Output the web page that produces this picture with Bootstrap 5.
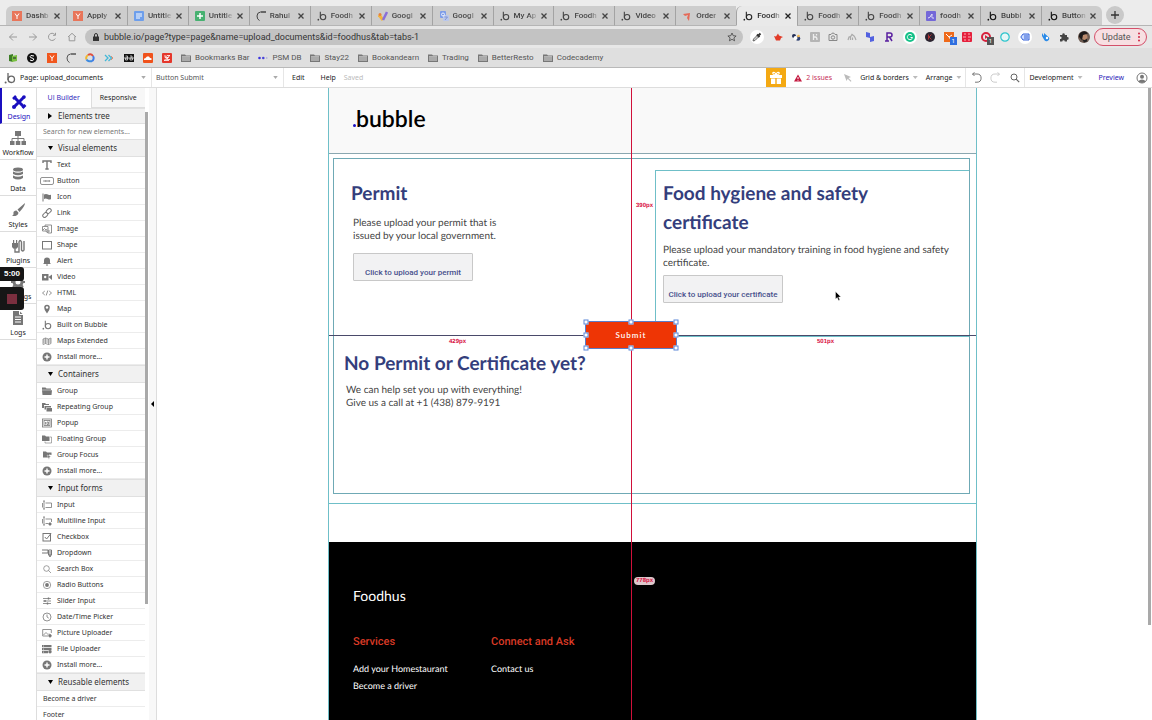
<!DOCTYPE html>
<html lang="en">
<head>
<meta charset="utf-8">
<meta name="viewport" content="width=device-width, initial-scale=1">
<title>Foodhus | Bubble Editor</title>
<link href="https://cdn.jsdelivr.net/npm/bootstrap@5.3.0/dist/css/bootstrap.min.css" rel="stylesheet">
<style>
  :root { --cyan:#6fbfc8; --navy:#343e7c; --ui:"Noto Sans","Open Sans",sans-serif; --chrome:Roboto,"Liberation Sans",sans-serif; }
  body { font-family:var(--ui); font-size:7px; line-height:14px; color:#333; background:#fff; height:100vh; overflow:hidden; }
  button, input, select { font:inherit; color:inherit; border:0; background:none; padding:0; }
  a { color:inherit; text-decoration:none; }
  svg { display:block; flex:none; }
  .i10 { width:10px; height:10px; } .i12 { width:12px; height:12px; } .i16 { width:16px; height:16px; }

  /* browser chrome */
  .browser { font-family:var(--chrome); font-size:8px; background:#e4e4e4; color:#444; }
  .tabstrip { height:26px; background:#ececec; padding:6px 4px 0 6px; border-bottom:1px solid #b5b5b5; }
  .tabstrip ul { flex:1; min-width:0; margin-bottom:-1px; }
  .btab { flex:1 1 0; min-width:0; height:20px; background:#cdcdcd; padding:0 5px 0 6px; position:relative; border-bottom:1px solid #b5b5b5; }
  .btab + .btab { border-left:1px solid #a3a3a3; }
  .btab:first-child { border-top-left-radius:6px; }
  .btab:last-child { border-top-right-radius:6px; }
  .btab a { overflow:hidden; white-space:nowrap; flex:1; margin-left:4px; margin-right:2px; font-weight:500; -webkit-mask-image:linear-gradient(90deg,#000 60%,transparent); mask-image:linear-gradient(90deg,#000 60%,transparent); }
  .btab.current { background:#e9e9e9; border-bottom-color:#e9e9e9; border-radius:6px 6px 0 0; color:#222; }
  .newtab { width:18px; height:18px; border-radius:50%; background:#c9c9c9; margin-left:4px; }
  .tools { height:22px; background:#e7e7e7; padding:0 5px 0 8px; }
  .navs { width:77px; padding-right:8px; color:#999; }
  .omni { height:16px; border-radius:8px; background:#c3c3c3; padding:0 6px 0 7px; }
  .omni input { font-size:9px; color:#333; outline:0; height:16px; }
  .exts { width:340px; margin:0 4px 0 7px; }
  .round { width:14px; height:14px; border-radius:50%; background:#fff; }
  .tag { position:absolute; right:-3px; bottom:-3px; width:7px; height:8px; font-size:6px; line-height:8px; color:#fff; text-align:center; }
  .update { height:18px; width:53px; border:1px solid #d4506a; border-radius:9px; background:#f7dfe2; font-size:9px; color:#555; padding:0 5px 0 7px; }
  .marks { height:20px; background:#dfdfdf; padding:0 8px; border-bottom:1px solid #b9b9b9; color:#555; gap:9px; }
  .marks .favs { width:164px; margin-right:0; }
  .marks a { white-space:nowrap; }

  /* editor bar */
  .editbar { height:20px; border-bottom:1px solid #ddd; white-space:nowrap; color:#222; }
  .editbar .sep { align-self:stretch; width:1px; background:#e6e6e6; }
  .pick { appearance:none; height:18px; background:url("data:image/svg+xml,%3Csvg xmlns='http://www.w3.org/2000/svg' viewBox='0 0 6 4'%3E%3Cpath d='M0 0h6L3 4z' fill='%23aaa'/%3E%3C/svg%3E") no-repeat right 5px center/5px 3px; }
  .pick-page { width:131px; } .pick-el { width:127px; color:#555; }
  .caret { width:5px; height:3px; background:#bbb; clip-path:polygon(0 0,100% 0,50% 100%); }
  .gift { width:20px; height:19px; background:#f4a913; }

  /* editor body */
  .rail { width:37px; border-right:1px solid #ddd; }
  .rail a { height:36px; border-bottom:1px solid #ddd; padding-top:6px; color:#222; }
  .rail svg { color:#777; width:16px; height:16px; }
  .rail .on { border-left:2px solid #1a0fc0; color:#1a0fc0; }
  .rail .on svg { color:#1a0fc0; }
  .side { width:108px; }
  .side .modes { height:20px; }
  .side .modes button { flex:1; font-weight:400; font-family:"Open Sans",sans-serif; }
  .side .modes button + button { background:#f7f7f7; border-left:1px solid #ddd; border-bottom:1px solid #ddd; color:#111; }
  .grp { font-size:8px; background:#f1f1f1; height:18px; padding-left:11px; gap:5px; border-top:1px solid #e0e0e0; border-bottom:1px solid #e0e0e0; width:100%; color:#333; }
  .grp.tree { height:16px; }
  .grp .tri { width:5px; height:4px; background:#000; clip-path:polygon(0 0,100% 0,50% 100%); }
  .grp.tree .tri { height:6px; width:4px; margin-right:1px; clip-path:polygon(0 0,100% 50%,0 100%); }
  .find { height:15px; width:100%; padding-left:6px; outline:0; }
  .find::placeholder { color:#777; opacity:1; }
  .els li { height:16px; border-bottom:1px solid #ececec; padding-left:5px; gap:5px; }
  .els svg { width:10px; height:10px; color:#777; }
  .els svg.wide { width:14px; margin:0 -2px; }
  .els .plain { padding-left:6px; }
  .sbar { width:4px; }
  .sbar div { background:#a9a9a9; width:3px; }
  .gutter { width:8px; background:#f8f8f8; border-right:1px solid #ddd; }
  .gutter span { width:3px; height:6px; background:#000; clip-path:polygon(100% 0,0 50%,100% 100%); }
  .recorder { position:absolute; left:0; top:179px; width:24px; font:700 8px/14px "Liberation Sans",sans-serif; color:#fff; }
  .recorder div { background:#161616; border-radius:0 3px 3px 0; }
  .recorder .stop { height:23px; margin-top:6px; width:24px; }
  .recorder i { width:10px; height:10px; background:#7b2f3f; }

  /* page being edited */
  .sheet { width:100%; max-width:649px; font-family:Lato,sans-serif; text-rendering:geometricPrecision; border:solid var(--cyan); border-width:0 1px; position:relative; }
  .masthead { height:66px; background:#f9f9f9; border-bottom:1px solid #8aa7b0; padding:0 24px 6px; }
  .wordmark { font-size:23px; line-height:28px; font-weight:600; color:#000; }
  .wordmark::before { content:""; display:inline-block; width:3px; height:3px; border-radius:50%; background:#1a0fc0; }
  .zone { padding:4px 6px 9px 4px; border-bottom:1px solid var(--cyan); }
  .frame { border:1px solid #6fa9b5; height:336px; }
  .frame .upper { height:178px; padding-top:11px; }
  .permit { flex:0 0 321px; padding:9px 0 0 17px; }
  .cert { border:1px solid var(--cyan); border-right:0; padding:8px 7px 0; }
  .frame h2 { font-size:19px; line-height:29px; font-weight:700; color:var(--navy); margin:0; }
  .frame p { font-size:10px; line-height:13px; color:#444; margin:0; }
  .inset { padding-left:2px; }
  .permit p { margin-top:9px; } .permit .upload { margin-top:10px; }
  .cert p { margin-top:7px; } .cert .upload { margin-top:5px; }
  .help { padding:12px 0 0 10px; } .help p { margin-top:6px; }
  .upload { width:120px; height:28px; border:1px solid #c8c8c8; border-radius:1px; background:#f2f2f3; font:500 8px/12px Roboto,sans-serif; color:#47508c; padding-top:11px; display:block; }
  .foot { background:#000; color:#fff; margin-top:38px; height:260px; padding:44px 24px 0; font-size:9px; line-height:17px; }
  .foot .name { font-size:14px; line-height:20px; }
  .foot h3 { font:500 11px/16px Roboto,sans-serif; color:#d93a26; margin:0; }
  .foot .cols { margin-top:28px; }
  .foot .cols > div { width:138px; }
  .foot ul { margin-top:10px; }
  .vguide { position:absolute; left:302px; top:0; bottom:0; border-left:1px solid #d0103a; }
  .hguide { position:absolute; left:0; right:0; top:247px; border-top:1px solid #4a4a6a; }
  .px { position:absolute; font:700 6px/8px "Liberation Sans",sans-serif; color:#d8103f; }
  .submit { position:absolute; left:256px; top:233px; width:92px; height:28px; background:#ee3505; color:#fff; font:600 8px/26px Lato,sans-serif; letter-spacing:1px; border:1px solid #5a7cc9; text-align:center; }
  .submit i { position:absolute; width:5px; height:5px; background:#fff; border:1px solid #5a86d8; transform:translate(-50%,-50%); }
  .pointer { position:absolute; left:506px; top:203px; }
</style>
</head>
<body class="d-flex flex-column">
<svg class="d-none" aria-hidden="true">
  <symbol id="b" viewBox="0 0 12 12"><path d="M4 1v7" stroke="currentColor" stroke-width="1.3"/><circle cx="7.3" cy="7.3" r="3.2" fill="none" stroke="currentColor" stroke-width="1.3"/><circle cx="1.6" cy="10.4" r="1" fill="currentColor"/></symbol>
  <symbol id="x" viewBox="0 0 8 8"><path d="M1.5 1.5l5 5M6.500 1.500l-5 5" stroke="currentColor" stroke-width="1.3"/></symbol>
  <symbol id="y" viewBox="0 0 10 10"><path d="M0 0h10v10H0z" fill="currentColor"/><path d="M3 2.500l2 3 2-3M5 5.500V8" fill="none" stroke="#fff"/></symbol>
  <symbol id="arc" viewBox="0 0 10 10"><path d="M10 1H4.500Q1 1.500 1 5Q1 8.500 3.500 9.500M5 1h5" fill="none" stroke="currentColor"/></symbol>
  <symbol id="folder" viewBox="0 0 10 10"><path d="M0 1.500h4l1 1h5V9H0z" fill="#777"/><path d="M1 4h8v4H1z" fill="#aaa"/><path d="M1 3.500h8" stroke="#ddd" stroke-width=".6"/></symbol>
  <symbol id="plus" viewBox="0 0 10 10"><circle cx="5" cy="5" r="4.500" fill="currentColor"/><path d="M5 2.500v5M2.500 5h5" stroke="#fff" stroke-width="1.400"/></symbol>
  <symbol id="fold" viewBox="0 0 10 10"><path d="M0 1.500h3.500l1 1H9v1.200H0zM0 4.200h10L9.500 9H.5z" fill="currentColor"/></symbol>
  <symbol id="mag" viewBox="0 0 10 10"><circle cx="4" cy="4" r="3" fill="none" stroke="currentColor"/><path d="M6.200 6.200L9.200 9.200" stroke="currentColor" stroke-width="1.200"/></symbol>
</svg>

<header class="browser">
  <div class="tabstrip d-flex">
    <ul class="list-unstyled d-flex">
      <li class="btab d-flex align-items-center"><svg class="i10" style="color:#e8755a"><use href="#y"/></svg><a href="#">Dashb</a><svg width="8" height="8"><use href="#x"/></svg></li>
      <li class="btab d-flex align-items-center"><svg class="i10" style="color:#e8755a"><use href="#y"/></svg><a href="#">Apply</a><svg width="8" height="8"><use href="#x"/></svg></li>
      <li class="btab d-flex align-items-center"><svg class="i10" viewBox="0 0 10 10"><rect width="10" height="10" rx="1" fill="#6d9eeb"/><path d="M2 3h6M2 5h6M2 7h4" stroke="#fff"/></svg><a href="#">Untitle</a><svg width="8" height="8"><use href="#x"/></svg></li>
      <li class="btab d-flex align-items-center"><svg class="i10" viewBox="0 0 10 10"><rect width="10" height="10" rx="1" fill="#47b171"/><path d="M2 5h6M5 2v6" stroke="#fff" stroke-width="1.500"/></svg><a href="#">Untitle</a><svg width="8" height="8"><use href="#x"/></svg></li>
      <li class="btab d-flex align-items-center"><svg class="i10"><use href="#arc"/></svg><a href="#">Rahul</a><svg width="8" height="8"><use href="#x"/></svg></li>
      <li class="btab d-flex align-items-center"><svg class="i10"><use href="#b"/></svg><a href="#">Foodh</a><svg width="8" height="8"><use href="#x"/></svg></li>
      <li class="btab d-flex align-items-center"><svg class="i10" viewBox="0 0 10 10"><path d="M1 4l4 5" stroke="#f1b53d" stroke-width="3"/><path d="M9 1L5 9" stroke="#8a6fd8" stroke-width="2.500"/><circle cx="2" cy="3.500" r="1.500" fill="#e9823d"/></svg><a href="#">Googl</a><svg width="8" height="8"><use href="#x"/></svg></li>
      <li class="btab d-flex align-items-center"><svg class="i10" viewBox="0 0 10 10"><rect x="1" width="6" height="7" rx="1" fill="#7e9de8"/><rect x="4" y="4" width="6" height="6" rx="1" fill="#b9c7ec"/><circle cx="4" cy="3.500" r="1.500" fill="none" stroke="#fff" stroke-width=".8"/><path d="M5.500 6h3L6 9" stroke="#6d84c8" fill="none" stroke-width=".7"/></svg><a href="#">Googl</a><svg width="8" height="8"><use href="#x"/></svg></li>
      <li class="btab d-flex align-items-center"><svg class="i10"><use href="#b"/></svg><a href="#">My Ap</a><svg width="8" height="8"><use href="#x"/></svg></li>
      <li class="btab d-flex align-items-center"><svg class="i10"><use href="#b"/></svg><a href="#">Foodh</a><svg width="8" height="8"><use href="#x"/></svg></li>
      <li class="btab d-flex align-items-center"><svg class="i10"><use href="#b"/></svg><a href="#">Video</a><svg width="8" height="8"><use href="#x"/></svg></li>
      <li class="btab d-flex align-items-center"><svg class="i10" viewBox="0 0 10 10"><path d="M1 3l7-1-1 8-2-3 1-3-3 1z" fill="#e56a58"/></svg><a href="#">Order</a><svg width="8" height="8"><use href="#x"/></svg></li>
      <li class="btab current d-flex align-items-center"><svg class="i10"><use href="#b"/></svg><a href="#">Foodh</a><svg width="8" height="8"><use href="#x"/></svg></li>
      <li class="btab d-flex align-items-center"><svg class="i10"><use href="#b"/></svg><a href="#">Foodh</a><svg width="8" height="8"><use href="#x"/></svg></li>
      <li class="btab d-flex align-items-center"><svg class="i10"><use href="#b"/></svg><a href="#">Foodh</a><svg width="8" height="8"><use href="#x"/></svg></li>
      <li class="btab d-flex align-items-center"><svg class="i10" viewBox="0 0 10 10"><rect width="10" height="10" rx="1" fill="#7468d8"/><path d="M2 7c3 0 3-4 4-4s-2 5 2 4" stroke="#fff" fill="none" stroke-width=".8"/></svg><a href="#">foodh</a><svg width="8" height="8"><use href="#x"/></svg></li>
      <li class="btab d-flex align-items-center"><svg class="i10" style="color:#111"><use href="#b"/></svg><a href="#">Bubbl</a><svg width="8" height="8"><use href="#x"/></svg></li>
      <li class="btab d-flex align-items-center"><svg class="i10" style="color:#111"><use href="#b"/></svg><a href="#">Button</a><svg width="8" height="8"><use href="#x"/></svg></li>
    </ul>
    <button class="newtab d-flex align-items-center justify-content-center me-4" aria-label="New tab"><svg class="i10" viewBox="0 0 10 10"><path d="M5 1v8M1 5h8" stroke="#333" stroke-width="1.300"/></svg></button>
  </div>

  <div class="tools d-flex align-items-center">
    <div class="navs d-flex justify-content-between">
      <button aria-label="Back"><svg class="i10" viewBox="0 0 10 10" fill="none" stroke="currentColor"><path d="M9 5H1.500M5 1.500L1.500 5 5 8.500"/></svg></button>
      <button aria-label="Forward"><svg class="i10" viewBox="0 0 10 10" fill="none" stroke="currentColor"><path d="M1 5h7.500M5 1.500L8.500 5 5 8.500"/></svg></button>
      <button aria-label="Reload"><svg class="i10" viewBox="0 0 10 10" fill="none" stroke="currentColor"><path d="M8.300 6.500a3.600 3.600 0 1 1-.5-4M8.500 .8v2.500H6"/></svg></button>
      <button aria-label="Home"><svg class="i10" viewBox="0 0 10 10" fill="none" stroke="currentColor"><path d="M1 5l4-3.700L9 5M2.200 4.500v4.300h5.600V4.500"/></svg></button>
    </div>
    <div class="omni d-flex align-items-center flex-grow-1">
      <svg width="8" height="8" viewBox="0 0 8 8"><path d="M1 3.500h6V8H1z" fill="#333"/><path d="M2.500 4V2a1.500 1.500 0 0 1 3 0v2" fill="none" stroke="#333"/></svg>
      <input class="flex-grow-1 ms-1" aria-label="Address" value="bubble.io/page?type=page&amp;name=upload_documents&amp;id=foodhus&amp;tab=tabs-1">
      <svg class="i10" viewBox="0 0 10 10"><path d="M5 1l1.200 2.700 2.900.3-2.200 1.900.7 2.900L5 7.300 2.400 8.800l.7-2.900L.9 4l2.900-.3z" fill="none" stroke="#444" stroke-width=".8"/></svg>
    </div>
    <div class="exts d-flex align-items-center justify-content-between">
      <span class="round d-flex align-items-center justify-content-center"><svg class="i10" viewBox="0 0 10 10"><path d="M1 9l.5-2L5.500 3l1.500 1.500L3 8.500z" fill="#ccc" stroke="#444" stroke-width=".7"/><path d="M5 2.500L7.500 5M6.300 3.700L8.500 1.500" stroke="#333" stroke-width="2"/></svg></span>
      <svg class="i10" viewBox="0 0 10 10"><path d="M1 4l2 .5L5 1.500l1 2 4 1.500-2 1-1 2.500H3z" fill="#e23b28"/></svg>
      <svg class="i10" viewBox="0 0 10 10"><circle cx="3" cy="4" r="2" fill="#222d55"/><circle cx="7" cy="6.500" r="2.300" fill="#2d3f70"/><circle cx="4.500" cy="6" r="2" fill="#fff"/><circle cx="7.500" cy="4" r="1.300" fill="#f3b64c"/></svg>
      <svg class="i10" viewBox="0 0 10 10"><rect width="10" height="10" rx="1" fill="#b5b5b5"/><path d="M3.500 2v6M3.500 5h2q1.500 0 1.500 3M6.500 2v1.500" stroke="#eee" stroke-width="1.300" fill="none"/></svg>
      <svg class="i10" viewBox="0 0 10 10" fill="none" stroke="#888"><path d="M1 2.500h2L4 1.200h2l1 1.300h2v6H1z"/><circle cx="5" cy="5.500" r="1.700"/></svg>
      <svg class="i10" viewBox="0 0 10 10" fill="none" stroke="#aaa" stroke-width="1.200"><path d="M1 8l1-3 1.500-.5M3.500 8V5L5 2.500 7 4l1 1.500L9 8M5.500 8V5.500"/></svg>
      <svg class="i10" viewBox="0 0 10 10"><path d="M1 0l4 1v5L1 5zM5 5l4-1v5l-4 1z" fill="#5261e0"/></svg>
      <svg class="i10" viewBox="0 0 10 10"><path d="M3 9V1h3a2 2 0 0 1 0 4H3M5.500 5l2.500 4M1 9h4" fill="none" stroke="#5a20a0" stroke-width="1.500"/></svg>
      <span class="round d-flex align-items-center justify-content-center"><svg class="i10" viewBox="0 0 10 10"><circle cx="5" cy="5" r="5" fill="#15c188"/><path d="M7 3.500A2.600 2.600 0 1 0 7.500 5.500H5.500" stroke="#fff" fill="none"/></svg></span>
      <svg class="i10" viewBox="0 0 10 10"><circle cx="5" cy="5" r="5" fill="#2c2430"/><path d="M3.500 2.500v5M6.500 2.500L4 5l2.500 2.500" stroke="#a33" fill="none"/></svg>
      <span class="position-relative"><svg class="i10" viewBox="0 0 10 10"><rect width="10" height="10" fill="#ef6a1a"/><path d="M2 2l3 3 3-2M5 5l2 3" stroke="#fff" fill="none"/></svg><span class="tag" style="background:#2f6fe0">1</span></span>
      <svg class="i10" viewBox="0 0 10 10"><rect width="10" height="10" rx="1" fill="#e5203c"/><path d="M2 2h2M6 2h2M1 5h3M6 5h3M2 8h2M6 8h2" stroke="#ffb0b8"/></svg>
      <span class="position-relative"><svg class="i10" viewBox="0 0 10 10"><circle cx="5" cy="5" r="4" fill="none" stroke="#d8203c" stroke-width="2"/><path d="M4 3l3 2-3 2z" fill="#d8203c"/></svg><span class="tag" style="background:#555">1</span></span>
      <svg class="i10" viewBox="0 0 10 10"><circle cx="5" cy="5" r="4.200" fill="#e8f7f7" stroke="#2cc4cc" stroke-width="1.200"/><path d="M3 5h.1M5 5h.1M7 5h.1" stroke="#2cc4cc"/></svg>
      <span class="round d-flex align-items-center justify-content-center"><svg class="i10" viewBox="0 0 10 10"><path d="M3 2h6v6H3L.8 5z" fill="#cdddff" stroke="#3763d8"/><path d="M4 4h4M4 6h4" stroke="#3763d8"/></svg></span>
      <svg class="i10" viewBox="0 0 10 10"><path d="M1 1l2 3V1l5 4.500a2.500 2.500 0 1 1-5 2L1 4z" fill="#2b8be8"/><circle cx="6" cy="6" r="1.200" fill="#fff"/></svg>
      <svg class="i10" viewBox="0 0 10 10"><path d="M1 3h2.300a1.300 1.300 0 1 1 2.500 0H8v2.200a1.300 1.300 0 1 1 0 2.500V9.500H5.800a1.200 1.200 0 1 0-2.500 0H1V7a1.200 1.200 0 1 0 0-2.300z" fill="#444"/></svg>
      <svg class="i12" viewBox="0 0 12 12"><circle cx="6" cy="6" r="6" fill="#6d5a50"/><circle cx="6.500" cy="6" r="3" fill="#b98a6d"/><path d="M1 6a5 5 0 0 1 9-3.500L5 4 4 9z" fill="#1d1a1a"/><path d="M4 8q3 2 5-.5v3l-3 1z" fill="#222"/></svg>
    </div>
    <button class="update d-flex align-items-center justify-content-between">Update<svg width="4" height="10" viewBox="0 0 4 10" fill="#d02846"><circle cx="2" cy="1.500" r="1"/><circle cx="2" cy="5" r="1"/><circle cx="2" cy="8.500" r="1"/></svg></button>
  </div>

  <nav class="marks d-flex align-items-center" aria-label="Bookmarks">
    <div class="favs d-flex align-items-center justify-content-between">
      <svg class="i10" viewBox="0 0 10 10"><path d="M1 2l4-1v8L1 8z" fill="#3c7d25"/><path d="M4 3l5-1v6L4 9z" fill="#7bc043"/><path d="M5 5h3" stroke="#223"/></svg>
      <svg class="i10" viewBox="0 0 10 10"><circle cx="5" cy="5" r="5" fill="#111"/><path d="M7 3Q3 1.500 3 3.800 3.500 5 5 5q2.500.5 1.500 2T3 7" fill="none" stroke="#fff"/></svg>
      <svg class="i10" style="color:#f1571e"><use href="#y"/></svg>
      <svg class="i10"><use href="#arc"/></svg>
      <svg class="i10" viewBox="0 0 10 10" fill="none" stroke-width="2"><path d="M1.500 6.500A3.700 3.700 0 0 1 3 2" stroke="#f0b62e"/><path d="M3 2a3.700 3.700 0 0 1 5 1" stroke="#df4d3c"/><path d="M8 3a3.700 3.700 0 0 1-1 5.200" stroke="#3f7ce8"/><path d="M7 8.200H4A3.500 3.500 0 0 1 1.500 6.500" stroke="#3d8ae0"/></svg>
      <svg class="i10" viewBox="0 0 10 10" fill="none"><path d="M1 2l3 3-3 3M4.500 2l3 3-3 3" stroke="#42b8d8" stroke-width="1.300"/><path d="M7 3l2 2-2 2" stroke="#e88a6a"/></svg>
      <svg class="i10" viewBox="0 0 10 10"><rect y="1" width="10" height="8" fill="#111"/><path d="M1.500 3h2v2h-2v2h2V5M6 3h2v2H6v2h2.500V5M0 5h10" fill="none" stroke="#ddd" stroke-width=".8"/></svg>
      <svg class="i10" viewBox="0 0 10 10"><rect width="10" height="10" rx="1" fill="#f0521c"/><path d="M1 7V5.500h1l1-1 1-1h2l1 1.500 1.500.3V7z" fill="#fff"/></svg>
      <svg class="i10" viewBox="0 0 10 10"><rect width="10" height="10" rx="1" fill="#e5372c"/><path d="M2 3h2.500L3 4.500h3.500l-2 2H8M5 2.500h3L2 7.500h5" fill="none" stroke="#fff" stroke-width=".8"/></svg>
    </div>
    <a href="#" class="d-flex align-items-center gap-1"><svg class="i10"><use href="#folder"/></svg>Bookmarks Bar</a>
    <a href="#" class="d-flex align-items-center gap-1"><svg class="i10" viewBox="0 0 10 10"><circle cx="1.500" cy="5" r="1.300" fill="#3b34e0"/><circle cx="5.300" cy="5" r="1.300" fill="#4a44d8"/><circle cx="8.800" cy="5" r=".7" fill="#99d"/></svg>PSM DB</a>
    <a href="#" class="d-flex align-items-center gap-1"><svg class="i10"><use href="#folder"/></svg>Stay22</a>
    <a href="#" class="d-flex align-items-center gap-1"><svg class="i10"><use href="#folder"/></svg>Bookandearn</a>
    <a href="#" class="d-flex align-items-center gap-1"><svg class="i10"><use href="#folder"/></svg>Trading</a>
    <a href="#" class="d-flex align-items-center gap-1"><svg class="i10"><use href="#folder"/></svg>BetterResto</a>
    <a href="#" class="d-flex align-items-center gap-1"><svg class="i10"><use href="#folder"/></svg>Codecademy</a>
  </nav>
</header>

<div class="editbar d-flex align-items-center">
  <svg class="i12 ms-1 me-1" style="color:#666"><use href="#b"/></svg>
  <select class="pick pick-page" aria-label="Page"><option>Page: upload_documents</option></select>
  <span class="sep me-1"></span>
  <select class="pick pick-el" aria-label="Element"><option>Button Submit</option></select>
  <span class="sep me-2"></span>
  <a href="#" class="me-3">Edit</a><a href="#" class="me-2">Help</a><span style="color:#bbb">Saved</span>
  <div class="d-flex align-items-center ms-auto">
    <button class="gift d-flex align-items-center justify-content-center" aria-label="What's new"><svg width="14" height="14" viewBox="0 0 14 14"><path d="M1 4h12v3H1zM2 7.500h4.300V13H2zM7.700 7.500H12V13H7.700z" fill="#fff"/><path d="M7 4Q3 3.500 4 1.500 6 .5 7 4q1-3.500 3-2.500Q11 3.500 7 4z" fill="none" stroke="#fff" stroke-width="1.200"/></svg></button>
    <svg class="ms-2 me-1" width="8" height="8" viewBox="0 0 8 8"><path d="M4 .5L8 7.500H0z" fill="#c4183f"/><path d="M4 3v2M4 5.800v.9" stroke="#fff"/></svg>
    <a href="#" class="me-2 pe-1" style="color:#c8325a">2 issues</a>
    <svg class="me-2" width="8" height="8" viewBox="0 0 8 8"><path d="M0 0l7 3-2.500 1L7.500 7l-.8.8-3-3L2.500 7z" fill="#bbb"/></svg>
    <a href="#" class="me-1">Grid &amp; borders</a><span class="caret me-2"></span>
    <a href="#" class="me-1">Arrange</a><span class="caret me-1"></span><span class="sep me-1"></span>
    <button aria-label="Undo" class="me-2"><svg class="i12" viewBox="0 0 12 12" fill="none" stroke="#777"><path d="M2.500 2H7a4 4 0 0 1 0 8.200H5M4.500 .5L2.500 2l2 2"/></svg></button>
    <button aria-label="Redo" class="me-2"><svg class="i12" viewBox="0 0 12 12" fill="none" stroke="#ccc"><path d="M9.500 2H5a4 4 0 0 0 0 8.200h2M7.500 .5L9.500 2l-2 2"/></svg></button>
    <button aria-label="Search" class="me-1"><svg class="i10" style="color:#666"><use href="#mag"/></svg></button>
    <span class="sep"></span>
    <a href="#" class="me-1 ms-1">Development</a><span class="caret me-3"></span>
    <a href="#" class="me-2" style="color:#2a22b8">Preview</a>
    <button aria-label="Account" class="ms-1 me-1"><svg class="i12" viewBox="0 0 12 12"><circle cx="6" cy="6" r="5" fill="none" stroke="#777"/><circle cx="6" cy="4.800" r="2" fill="#777"/><path d="M2 9.500Q6 5.500 10 9.500L6 11z" fill="#777"/></svg></button>
  </div>
</div>

<main class="d-flex flex-grow-1 position-relative overflow-hidden">
  <nav class="rail flex-shrink-0 text-center" aria-label="Editor sections">
    <a href="#" class="on d-flex flex-column align-items-center"><svg viewBox="0 0 16 16"><path d="M3 3l10 10M13 3L3 13" stroke="currentColor" stroke-width="3"/><path d="M2 5l3-3M11.500 14l3-3" stroke="currentColor" stroke-width="2.500"/><circle cx="3" cy="13" r="2" fill="currentColor"/><circle cx="13" cy="3" r="1.800" fill="currentColor"/></svg>Design</a>
    <a href="#" class="d-flex flex-column align-items-center"><svg viewBox="0 0 16 16" fill="currentColor"><path d="M5 1h6v5H5zM0 11h4.500v4H0zM5.800 11h4.500v4H5.800zM11.500 11H16v4h-4.500z"/><path d="M8 6v5M2 11V8.500h12V11" stroke="currentColor" fill="none"/></svg>Workflow</a>
    <a href="#" class="d-flex flex-column align-items-center"><svg viewBox="0 0 16 16" fill="currentColor"><ellipse cx="8" cy="3.500" rx="5" ry="2"/><path d="M3 5.500q5 2.500 10 0V8q-5 2.500-10 0zM3 9.500q5 2.500 10 0V12q-5 3-10 0z"/></svg>Data</a>
    <a href="#" class="d-flex flex-column align-items-center"><svg viewBox="0 0 16 16" fill="currentColor"><path d="M15 1L7.500 7.500l2 2.500Q15 4 15 1zM6.500 8.500l2 2.200Q8 14.500 2 14q2-1 1.500-3t3-2.500z"/></svg>Styles</a>
    <a href="#" class="d-flex flex-column align-items-center"><svg viewBox="0 0 16 16"><path d="M2 5h6v4q-1 2-3 2T2 9zM3 2h1.200v3H3zM6 2h1.200v3H6z" fill="currentColor"/><path d="M5 11v3h4V4q1-3 2.500 0v8q1.500 2 2.500 0V3" fill="none" stroke="currentColor" stroke-width="1.400"/></svg>Plugins</a>
    <a href="#" class="d-flex flex-column align-items-center"><svg viewBox="0 0 16 16"><circle cx="8" cy="8" r="4" fill="none" stroke="currentColor" stroke-width="3"/><path d="M8 1v3M8 12v3M1 8h3M12 8h3M3 3l2 2M11 11l2 2M13 3l-2 2M5 11l-2 2" stroke="currentColor" stroke-width="2"/></svg>Settings</a>
    <a href="#" class="d-flex flex-column align-items-center"><svg viewBox="0 0 16 16"><path d="M3 1h6.500L13 4.500V15H3z" fill="currentColor"/><path d="M5 7h6M5 9.500h6M5 12h6M9.500 1v3.500H13" stroke="#fff" fill="none"/></svg>Logs</a>
  </nav>

  <aside class="side flex-shrink-0">
    <div class="modes d-flex"><button style="color:#2a22b8">UI Builder</button><button>Responsive</button></div>
    <button class="grp tree d-flex align-items-center"><span class="tri"></span>Elements tree</button>
    <input class="find d-block" type="search" placeholder="Search for new elements..." aria-label="Search for new elements">
    <button class="grp d-flex align-items-center"><span class="tri"></span>Visual elements</button>
    <ul class="els list-unstyled mb-0">
      <li class="d-flex align-items-center"><svg viewBox="0 0 10 10"><path d="M1 3V1h8v2M5 1v8M3.300 9h3.400" fill="none" stroke="currentColor" stroke-width="1.400"/></svg>Text</li>
      <li class="d-flex align-items-center"><svg class="wide" viewBox="0 0 14 10"><rect x=".5" y="1.500" width="13" height="7" rx="1.500" fill="none" stroke="currentColor" stroke-width=".8"/><path d="M3.500 5h7" stroke="currentColor" stroke-width="1.400" stroke-dasharray="1 .4"/></svg>Button</li>
      <li class="d-flex align-items-center"><svg viewBox="0 0 10 10"><path d="M1 1.500v8" stroke="currentColor"/><path d="M2 2.500q2-1 4 0t3 0v4.500q-1.500 1-3.500 0T2 7z" fill="currentColor"/></svg>Icon</li>
      <li class="d-flex align-items-center"><svg viewBox="0 0 10 10" fill="none" stroke="currentColor"><rect x="4" y="1.300" width="5.500" height="3.600" rx="1.800" transform="rotate(-45 6.700 3.100)"/><rect x=".5" y="5.200" width="5.500" height="3.600" rx="1.800" transform="rotate(-45 3.200 7)"/></svg>Link</li>
      <li class="d-flex align-items-center"><svg viewBox="0 0 10 10" fill="none" stroke="currentColor" stroke-width=".8"><path d="M3 2.500V1h6.500v8H6L3.500 7M.5 2.500h5.500v4.500H.5zM1 6l1.500-1.500L4 6l1.500-1M6 9V7h2"/></svg>Image</li>
      <li class="d-flex align-items-center"><svg viewBox="0 0 10 10"><rect x=".5" y="1.500" width="9" height="7.500" fill="none" stroke="currentColor"/></svg>Shape</li>
      <li class="d-flex align-items-center"><svg viewBox="0 0 10 10"><path d="M2 7V4.500a3 3 0 0 1 6 0V7l1 1H1zM4 8.500h2V9.500H4z" fill="currentColor"/></svg>Alert</li>
      <li class="d-flex align-items-center"><svg viewBox="0 0 10 10"><path d="M0 2h6.500v6.500H0zM6.500 5L10 2.500V8z" fill="currentColor"/><circle cx="3.200" cy="5" r="1.200" fill="#fff"/></svg>Video</li>
      <li class="d-flex align-items-center"><svg viewBox="0 0 10 10" fill="none" stroke="currentColor" stroke-width=".8"><path d="M2.800 3L.5 5l2.300 2M7.200 3l2.300 2-2.300 2M5.800 2.500l-1.600 5"/></svg>HTML</li>
      <li class="d-flex align-items-center"><svg viewBox="0 0 10 10"><path d="M5 9.500Q2 6 2.200 3.500a2.800 2.800 0 0 1 5.600 0Q8 6 5 9.500z" fill="currentColor"/><circle cx="5" cy="3.500" r="1.200" fill="#fff"/></svg>Map</li>
      <li class="d-flex align-items-center"><svg><use href="#b"/></svg>Built on Bubble</li>
      <li class="d-flex align-items-center"><svg viewBox="0 0 10 10" fill="none" stroke="currentColor" stroke-width=".7"><path d="M1 3l2.500-1 3 1L9 2v5.500l-2.500 1-3-1L1 8.500zM3.500 2v5.500M6.500 3v5.500M5 3v4M8 3v4M2 3v4"/></svg>Maps Extended</li>
      <li class="d-flex align-items-center"><svg><use href="#plus"/></svg>Install more...</li>
    </ul>
    <button class="grp d-flex align-items-center"><span class="tri"></span>Containers</button>
    <ul class="els list-unstyled mb-0">
      <li class="d-flex align-items-center"><svg><use href="#fold"/></svg>Group</li>
      <li class="d-flex align-items-center"><svg viewBox="0 0 10 10"><path d="M0 1h3l1 1h3v1H2v3H0zM2.500 4H9v1.500H4v2H2.500zM4.500 6H10v3.500H4.500z" fill="currentColor"/></svg>Repeating Group</li>
      <li class="d-flex align-items-center"><svg viewBox="0 0 10 10" fill="none" stroke="currentColor" stroke-width=".8"><rect x=".5" y="1" width="9" height="8"/><rect x="2" y="2.500" width="6" height="5"/><path d="M3.500 4v2.500M5 4h1.500v2.500H5z"/></svg>Popup</li>
      <li class="d-flex align-items-center"><svg viewBox="0 0 10 10"><path d="M0 1.500h3l1 1h3.500V7H0z" fill="currentColor"/><path d="M8 3h1.500v6H3V7.500" fill="none" stroke="currentColor" stroke-width=".6"/></svg>Floating Group</li>
      <li class="d-flex align-items-center"><svg viewBox="0 0 10 10"><path d="M1 1.500h3l1 1h4.500V5L7 4.500l.5 3H1z" fill="currentColor"/><path d="M5 5l4 1.500-1.500.8L7 9.500z" fill="currentColor" stroke="#fff" stroke-width=".4"/></svg>Group Focus</li>
      <li class="d-flex align-items-center"><svg><use href="#plus"/></svg>Install more...</li>
    </ul>
    <button class="grp d-flex align-items-center"><span class="tri"></span>Input forms</button>
    <ul class="els list-unstyled mb-0">
      <li class="d-flex align-items-center"><svg viewBox="0 0 10 10" fill="none" stroke="currentColor" stroke-width=".8"><path d="M1 1h2M2 1v8M1 9h2M3.500 3h6v4.500h-6M.5 3v4.500"/></svg>Input</li>
      <li class="d-flex align-items-center"><svg viewBox="0 0 10 10" fill="none" stroke="currentColor" stroke-width=".8"><path d="M1 1h2M2 1v8M1 9h2M3.500 3h6v3M3.500 7.500h3M.5 3v4.500"/><circle cx="8" cy="8" r="1.200" fill="currentColor"/></svg>Multiline Input</li>
      <li class="d-flex align-items-center"><svg viewBox="0 0 10 10" fill="none" stroke="currentColor"><rect x="1" y="1.500" width="7.500" height="7.500"/><path d="M2.800 5l1.800 2L9 1.500"/></svg>Checkbox</li>
      <li class="d-flex align-items-center"><svg viewBox="0 0 10 10" fill="none" stroke="currentColor"><path d="M0 2h6v3H0M6.500 2h3v5h-3zM7 4h2M7 6h2M7 7l1 2 1-2"/></svg>Dropdown</li>
      <li class="d-flex align-items-center"><svg viewBox="0 0 10 10" fill="none" stroke="currentColor" stroke-width=".7"><circle cx="4.500" cy="4.500" r="2.800"/><path d="M6.500 6.500L9 9"/></svg>Search Box</li>
      <li class="d-flex align-items-center"><svg viewBox="0 0 10 10"><circle cx="5" cy="5" r="3.700" fill="none" stroke="currentColor" stroke-width=".7"/><circle cx="5" cy="5" r="1.900" fill="currentColor"/></svg>Radio Buttons</li>
      <li class="d-flex align-items-center"><svg viewBox="0 0 10 10" stroke="currentColor" stroke-width=".8"><path d="M1 2.500h8M1 5h8M1 7.500h8"/><path d="M6.500 1.500v2M3 4v2M5.500 6.500v2" stroke-width="1.400"/></svg>Slider Input</li>
      <li class="d-flex align-items-center"><svg viewBox="0 0 10 10" fill="none" stroke="currentColor" stroke-width=".8"><circle cx="5" cy="5" r="4"/><path d="M5 2.500V5l1.800 1.200"/></svg>Date/Time Picker</li>
      <li class="d-flex align-items-center"><svg viewBox="0 0 10 10" fill="none" stroke="currentColor" stroke-width=".8"><path d="M6 8H.7V1.500h8.600V5M1.500 7L4 4.500 6 6.500 7 5.500"/><circle cx="8" cy="7.800" r="1.300" fill="currentColor"/></svg>Picture Uploader</li>
      <li class="d-flex align-items-center"><svg viewBox="0 0 10 10"><path d="M0 1h9.500v2.200H0zM0 4h9.500v2.200H0zM0 7h6v2.200H0z" fill="currentColor"/><circle cx="8" cy="7.800" r="1.700" fill="currentColor"/><path d="M1 2.100h1M1 5.100h1M1 8.100h1" stroke="#fff" stroke-width=".7"/></svg>File Uploader</li>
      <li class="d-flex align-items-center"><svg><use href="#plus"/></svg>Install more...</li>
    </ul>
    <button class="grp d-flex align-items-center"><span class="tri"></span>Reusable elements</button>
    <ul class="els list-unstyled mb-0">
      <li class="plain d-flex align-items-center">Become a driver</li>
      <li class="plain d-flex align-items-center">Footer</li>
    </ul>
  </aside>
  <div class="sbar pt-4 h-100 flex-shrink-0"><div style="height:81%"></div></div>
  <div class="gutter d-flex align-items-center justify-content-center flex-shrink-0"><span></span></div>

  <section class="flex-grow-1 d-flex justify-content-center">
    <div class="sheet">
      <div class="masthead d-flex align-items-center"><div class="wordmark">bubble</div></div>
      <div class="zone">
        <div class="frame">
          <div class="upper d-flex">
            <div class="permit">
              <h2>Permit</h2>
              <div class="inset"><p>Please upload your permit that is<br>issued by your local government.</p>
              <button class="upload">Click to upload your permit</button></div>
            </div>
            <div class="cert flex-grow-1">
              <h2>Food hygiene and safety<br>certificate</h2>
              <p>Please upload your mandatory training in food hygiene and safety certificate.</p>
              <button class="upload">Click to upload your certificate</button>
            </div>
          </div>
          <div class="help">
            <h2>No Permit or Certificate yet?</h2>
            <p class="inset">We can help set you up with everything!<br>Give us a call at +1 (438) 879-9191</p>
          </div>
        </div>
      </div>
      <footer class="foot">
        <div class="name">Foodhus</div>
        <div class="cols d-flex">
          <div><h3>Services</h3><ul class="list-unstyled"><li><a href="#">Add your Homestaurant</a></li><li><a href="#">Become a driver</a></li></ul></div>
          <div><h3>Connect and Ask</h3><ul class="list-unstyled"><li><a href="#">Contact us</a></li></ul></div>
        </div>
      </footer>
      <div class="hguide"></div><div class="vguide"></div>
      <span class="px" style="left:307px;top:114px">390px</span>
      <span class="px" style="left:120px;top:250px">429px</span>
      <span class="px" style="left:488px;top:250px">501px</span>
      <span class="px rounded-1" style="left:305px;top:489px;background:#ddc8cc;padding:0 2px">778px</span>
      <button class="submit">Submit<i style="left:0;top:0"></i><i style="left:50%;top:0"></i><i style="left:100%;top:0"></i><i style="left:0;top:50%"></i><i style="left:100%;top:50%"></i><i style="left:0;top:100%"></i><i style="left:50%;top:100%"></i><i style="left:100%;top:100%"></i></button>
      <svg class="pointer" width="7" height="10" viewBox="0 0 7 10"><path d="M.5.500v7.500L2.300 6.500 3.500 9.500l1.300-.6L3.600 6H6z" fill="#000" stroke="#fff" stroke-width=".4"/></svg>
    </div>
  </section>
  <div class="sbar flex-shrink-0"><div style="height:85%"></div></div>

  <div class="recorder"><div class="text-center">5:00</div><div class="stop d-flex align-items-center justify-content-center"><i></i></div></div>
</main>
<script src="https://cdn.jsdelivr.net/npm/bootstrap@5.3.0/dist/js/bootstrap.bundle.min.js"></script>
</body>
</html>
